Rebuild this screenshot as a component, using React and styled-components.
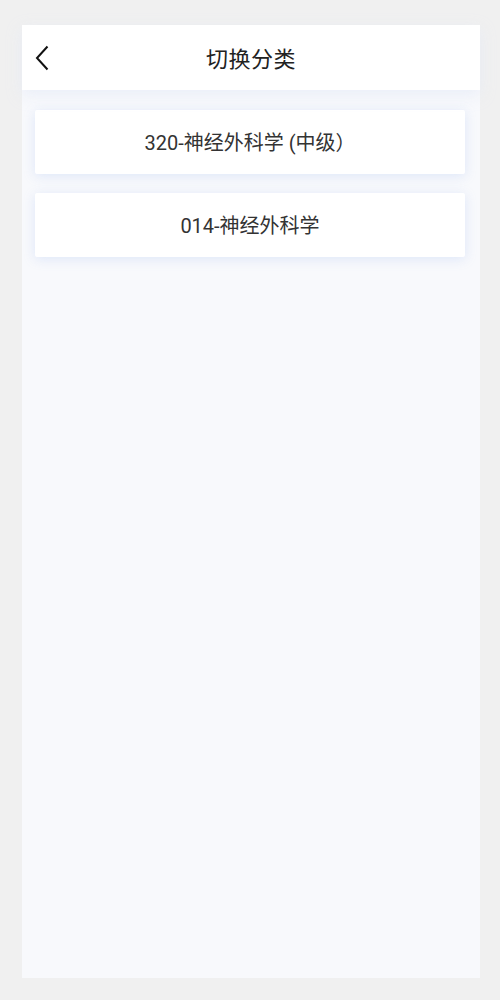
import React from "react"
import styled, { createGlobalStyle } from "styled-components"

const GlobalStyle = createGlobalStyle`
  html, body {
    margin: 0;
    padding: 0;
    background: #f0f0f0;
  }
  body {
    font-family: Roboto, "Noto Sans CJK SC", sans-serif;
  }
`

const Frame = styled.div`
  box-sizing: border-box;
  width: 500px;
  height: 1000px;
  padding: 25px 20px 22px 22px;
  background: #f0f0f0;
`

const Panel = styled.div`
  height: 100%;
  display: flex;
  flex-direction: column;
  background: #f8f9fc;
`

const Header = styled.header`
  position: relative;
  height: 65px;
  flex-shrink: 0;
  display: flex;
  align-items: center;
  justify-content: center;
  background: #fff;
  box-shadow: 0 5px 14px rgba(228, 234, 246, 0.7);
`

const BackButton = styled.button`
  position: absolute;
  left: 8px;
  top: 50%;
  transform: translateY(-50%);
  border: none;
  background: none;
  padding: 0;
  width: 24px;
  height: 28px;
  display: flex;
  align-items: center;
  justify-content: center;
  cursor: pointer;
`

const Title = styled.h1`
  margin: 0 0 2px;
  font-size: 22px;
  font-weight: 400;
  color: #222;
  letter-spacing: 0.5px;
`

const List = styled.div`
  display: flex;
  flex-direction: column;
  gap: 19px;
  padding: 20px 15px 0 13px;
`

const Card = styled.div`
  height: 64px;
  display: flex;
  align-items: center;
  justify-content: center;
  background: #fff;
  border-radius: 2px;
  box-shadow: 0 2px 12px rgba(216, 227, 248, 0.85);
  font-size: 20px;
  color: #333;
  padding-bottom: 2px;
  box-sizing: border-box;
`

const categories = ["320-神经外科学 (中级）", "014-神经外科学"]

export default function App() {
  return (
    <>
      <GlobalStyle />
      <Frame>
        <Panel>
          <Header>
            <BackButton aria-label="返回">
              <svg width="14" height="26" viewBox="0 0 14 26" fill="none">
                <path d="M12.5 1.5 L2 13 L12.5 24.5" stroke="#111" strokeWidth="2" />
              </svg>
            </BackButton>
            <Title>切换分类</Title>
          </Header>
          <List>
            {categories.map(name => (
              <Card key={name}>{name}</Card>
            ))}
          </List>
        </Panel>
      </Frame>
    </>
  )
}
